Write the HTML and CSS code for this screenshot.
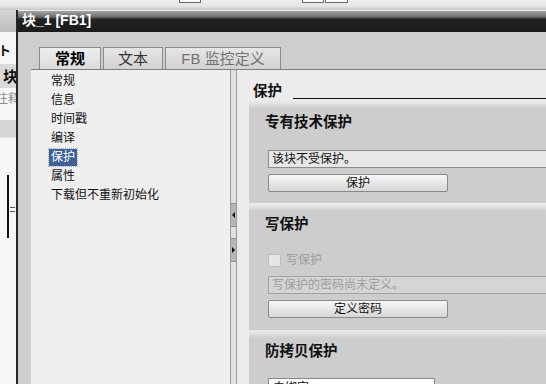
FILE: index.html
```html
<!DOCTYPE html>
<html lang="zh">
<head>
<meta charset="utf-8">
<title>块_1 [FB1]</title>
<link rel="stylesheet" href="styles.css">
</head>
<body>
<div class="toolbar">
  <span class="tb-btn tb-a"></span>
  <span class="tb-btn tb-b"></span>
  <span class="tb-btn tb-c"></span>
</div>
<div class="main">
  <div class="bgapp">
    <div class="bg-top"></div>
    <div class="bg-t1">ト</div>
    <div class="bg-blk">块</div>
    <div class="bg-note">注释</div>
    <div class="bg-band"></div>
    <div class="bg-graph"><span class="vline"></span><span class="eq"></span></div>
  </div>
  <div class="dialog">
    <div class="titlebar">块_1 [FB1]</div>
    <div class="inner">
      <div class="tabrow">
        <div class="tab tab-1 active">常规</div>
        <div class="tab tab-2">文本</div>
        <div class="tab tab-3 dim">FB 监控定义</div>
      </div>
      <div class="panel">
        <ul class="nav">
          <li>常规</li>
          <li>信息</li>
          <li>时间戳</li>
          <li>编译</li>
          <li><span class="sel">保护</span></li>
          <li>属性</li>
          <li>下载但不重新初始化</li>
        </ul>
        <div class="splitter">
          <span class="sbtn"><span class="arr-left"></span></span>
          <span class="sbtn sbtn-2"><span class="arr-right"></span></span>
        </div>
        <div class="pane">
          <div class="heading"><span class="htext">保护</span><span class="rule"></span></div>
          <section class="group g1">
            <div class="gtitle">专有技术保护</div>
            <div class="field f1">该块不受保护。</div>
            <div class="btn">保护</div>
          </section>
          <section class="group g2">
            <div class="gtitle">写保护</div>
            <div class="checkrow"><span class="cbox"></span><span class="clabel">写保护</span></div>
            <div class="field f2 disabled">写保护的密码尚未定义。</div>
            <div class="btn">定义密码</div>
          </section>
          <section class="group g3">
            <div class="gtitle">防拷贝保护</div>
            <div class="dropdown">未绑定</div>
          </section>
        </div>
      </div>
    </div>
  </div>
</div>
</body>
</html>
```
FILE: styles.css
```css
* { box-sizing: border-box; }
html, body { margin: 0; padding: 0; }
body {
  width: 546px;
  height: 384px;
  overflow: hidden;
  background: #e8e8e8;
  font-family: "Liberation Sans", "Noto Sans CJK SC", sans-serif;
  font-size: 12px;
  color: #111;
}

/* top toolbar of background app */
.toolbar {
  height: 10px;
  display: flex;
  align-items: flex-start;
  background: linear-gradient(to bottom, #ececec 0, #e6e6e6 6px, #c6c6c6 10px);
}
.tb-btn {
  height: 3px;
  background: #fafafa;
  border: 1px solid #6a6a6a;
  border-top: none;
}
.tb-a { margin-left: 179px; width: 22px; }
.tb-b { margin-left: 101px; width: 22px; }
.tb-c { margin-left: 1px; width: 23px; }

.main {
  display: flex;
  height: 374px;
}

/* background application column (left) */
.bgapp {
  width: 16px;
  background: #f7f7f7;
  overflow: hidden;
  display: flex;
  flex-direction: column;
}
.bg-top {
  height: 22px;
  background: linear-gradient(to bottom, #d4d4d4, #bcbcbc);
}
.bg-t1 {
  margin-top: 8px;
  height: 20px;
  line-height: 20px;
  font-weight: bold;
  font-size: 13px;
  margin-left: -2px;
  font-family: "Noto Sans CJK JP", sans-serif;
}
.bg-blk {
  margin-top: 4px;
  height: 24px;
  line-height: 24px;
  background: #dadada;
  font-weight: bold;
  font-size: 15px;
  padding-left: 3px;
  white-space: nowrap;
  font-family: "Noto Sans CJK SC", sans-serif;
}
.bg-note {
  height: 20px;
  line-height: 20px;
  color: #8a8a8a;
  font-size: 12px;
  margin-left: -4px;
  white-space: nowrap;
  font-family: "Noto Sans CJK SC", sans-serif;
}
.bg-band {
  margin-top: 12px;
  height: 18px;
  background: #d6d6d6;
  border-bottom: 1px solid #e0e0e0;
}
.bg-graph {
  margin-top: 37px;
  height: 63px;
  display: flex;
  padding-left: 7px;
}
.vline {
  width: 2px;
  height: 63px;
  background: #111;
}
.eq {
  margin-left: 1px;
  margin-top: 32px;
  width: 5px;
  height: 5px;
  border-top: 1px solid #555;
  border-bottom: 1px solid #555;
}

/* dialog */
.dialog {
  flex: 1;
  display: flex;
  flex-direction: column;
  border-left: 2px solid #262626;
  min-width: 0;
}
.titlebar {
  height: 22px;
  line-height: 21px;
  padding-left: 4px;
  color: #fff;
  font-weight: bold;
  font-size: 14px;
  white-space: nowrap;
  background: linear-gradient(to bottom, #ededed 0, #ededed 1px, #a4a4a4 1px, #6c6c6c 7px, #222 9px, #1a1a1a 100%);
}
.inner {
  flex: 1;
  display: flex;
  flex-direction: column;
  background: #cecece;
  padding-left: 13px;
  min-height: 0;
}
.tabrow {
  height: 38px;
  padding-top: 15px;
  padding-left: 8px;
  display: flex;
  gap: 2px;
  border-bottom: 1px solid #7e7e7e;
}
.tab {
  height: 22px;
  border: 1px solid #8a8a8a;
  border-bottom: none;
  background: linear-gradient(to bottom, #e6e6e6, #d2d2d2);
  text-align: center;
  font-size: 15px;
  line-height: 21px;
  color: #333;
  white-space: nowrap;
}
.tab-1 { width: 62px; }
.tab-2 { width: 60px; }
.tab-3 { width: 116px; }
.tab.active {
  background: linear-gradient(to bottom, #eeeeee, #dcdcdc);
  font-weight: bold;
  color: #000;
}
.tab.dim { color: #727272; }

.panel {
  flex: 1;
  display: flex;
  min-height: 0;
}
.nav {
  list-style: none;
  margin: 0;
  padding: 2px 0 0 0;
  width: 199px;
  background: #efefef;
}
.nav li {
  height: 19px;
  line-height: 19px;
  padding-left: 20px;
  border-bottom: 1px solid #ebebeb;
  white-space: nowrap;
}
.sel {
  display: inline-block;
  margin-left: -2px;
  padding: 0 2px;
  line-height: 17px;
  background: #3e6196;
  color: #fff;
  outline: 1px dotted #9fb0cc;
}
.splitter {
  width: 7px;
  background: #e0e0e0;
  border-left: 1px solid #9a9a9a;
  border-right: 1px solid #9a9a9a;
  display: flex;
  flex-direction: column;
}
.sbtn {
  margin-top: 133px;
  height: 24px;
  background: #b6b6b6;
  border-top: 1px solid #8e8e8e;
  border-bottom: 1px solid #8e8e8e;
  display: flex;
  align-items: center;
  justify-content: center;
}
.sbtn-2 { margin-top: 11px; }
.arr-left {
  width: 0; height: 0;
  border-top: 3px solid transparent;
  border-bottom: 3px solid transparent;
  border-right: 3px solid #111;
}
.arr-right {
  width: 0; height: 0;
  border-top: 3px solid transparent;
  border-bottom: 3px solid transparent;
  border-left: 3px solid #111;
}

.pane {
  flex: 1;
  background: #ebebeb;
  padding-left: 12px;
  overflow: hidden;
  min-width: 0;
}
.heading {
  height: 29px;
  display: flex;
  align-items: flex-end;
  padding-left: 4px;
}
.htext {
  font-weight: bold;
  font-size: 14.5px;
  line-height: 16px;
  white-space: nowrap;
}
.rule {
  flex: 1;
  margin-left: 11px;
  height: 0;
  border-top: 1px solid #111;
}
.group {
  margin-top: 1px;
  background: linear-gradient(to bottom, #ededed 0, #e4e4e4 3px, #cdcdcd 8px, #cdcdcd 100%);
  padding-left: 19px;
  padding-top: 12px;
  padding-bottom: 11px;
}
.g2 { margin-top: 0; padding-top: 11px; padding-bottom: 12px; }
.g3 { margin-top: 0; padding-top: 11px; padding-bottom: 20px; }
.gtitle {
  margin-left: -3px;
  height: 20px;
  line-height: 20px;
  font-weight: bold;
  font-size: 14.5px;
  white-space: nowrap;
}
.field {
  margin-top: 18px;
  margin-right: -10px;
  height: 18px;
  line-height: 16px;
  padding-left: 3px;
  border: 1px solid #8c8c8c;
  background: #e7e7e7;
  white-space: nowrap;
}
.f2 { margin-top: 8px; }
.field.disabled {
  background: #d5d5d5;
  border-color: #a2a2a2;
  color: #9c9c9c;
}
.btn {
  margin-top: 6px;
  width: 180px;
  height: 18px;
  line-height: 16px;
  text-align: center;
  border: 1px solid #8a8a8a;
  border-radius: 2px;
  background: linear-gradient(to bottom, #f7f7f7, #e4e4e4 60%, #d6d6d6);
}
.checkrow {
  margin-top: 18px;
  height: 16px;
  display: flex;
  align-items: center;
}
.cbox {
  width: 13px;
  height: 13px;
  border: 1px solid #bdbdbd;
  border-radius: 2px;
  background: #e6e6e6;
}
.clabel {
  margin-left: 5px;
  color: #9c9c9c;
  line-height: 16px;
}
.dropdown {
  margin-top: 17px;
  width: 167px;
  height: 20px;
  line-height: 18px;
  padding-left: 4px;
  background: #fff;
  border: 1px solid #888;
}
```
